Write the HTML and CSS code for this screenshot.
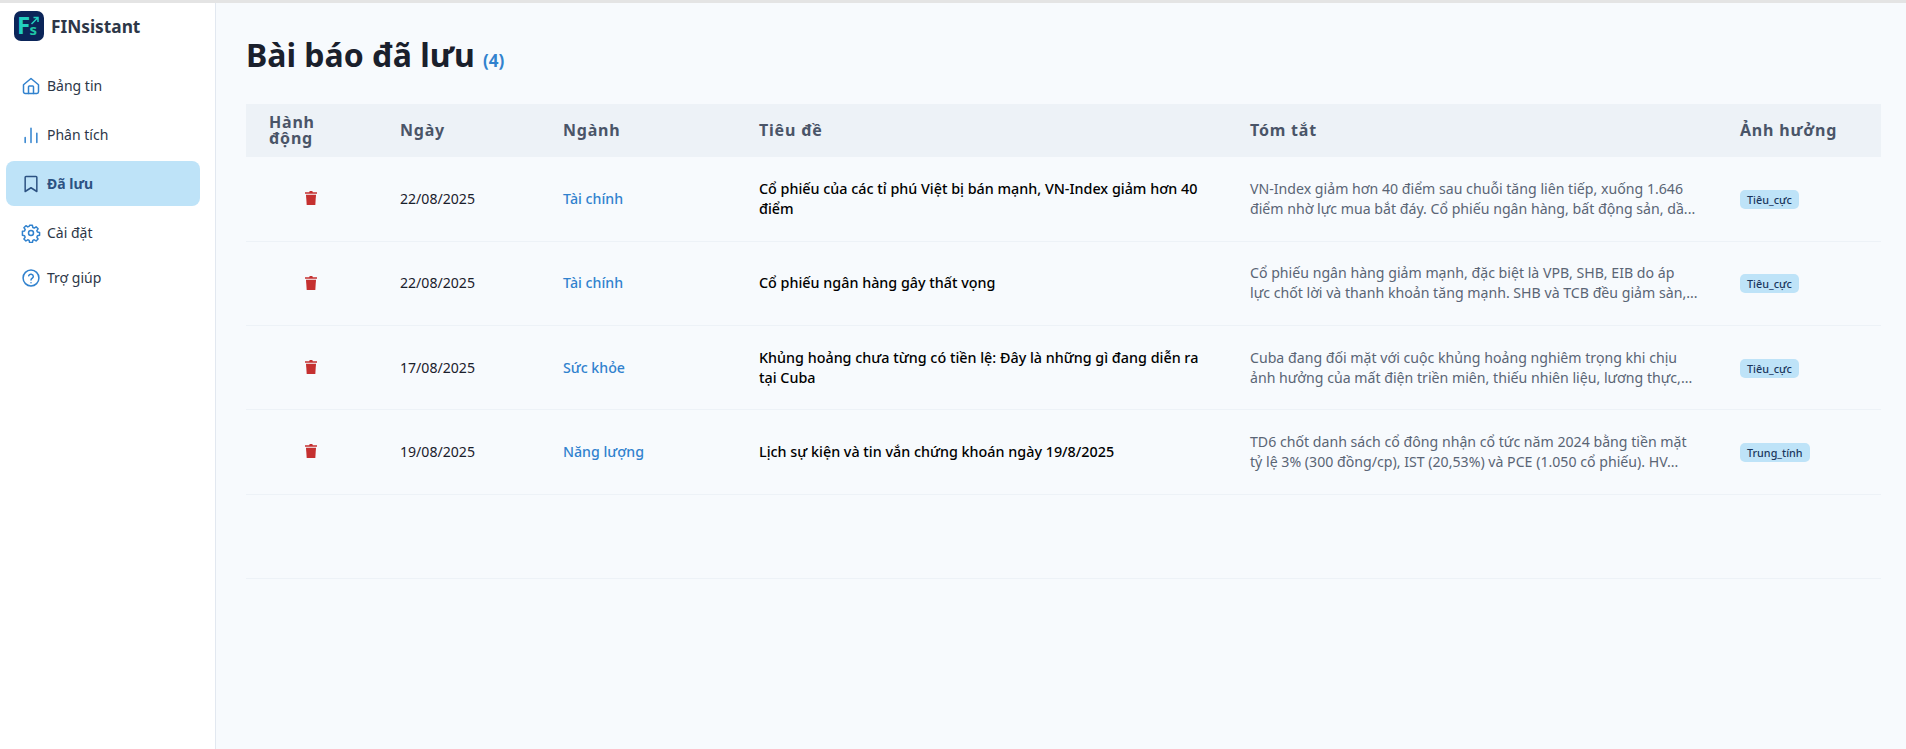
FILE: index.html
```html
<!DOCTYPE html>
<html lang="vi">
<head>
  <meta charset="utf-8">
  <title>FINsistant</title>
  <link rel="stylesheet" href="styles.css">
</head>
<body>
  <div class="app">
    <aside class="sidebar">
      <div class="brand">
        <svg class="brand-logo" viewBox="0 0 30 30">
          <rect width="30" height="30" rx="7" fill="#0b2559"/>
          <text x="3" y="23" class="logo-f" fill="#22cfc0">F</text>
          <text x="15.5" y="23.5" class="logo-s" fill="#1fc6a6">s</text>
          <path d="M17.5 13l6-6M19.5 6.5h4.5V11" fill="none" stroke="#22cfc0" stroke-width="1.5"/>
        </svg>
        <span class="brand-name">FINsistant</span>
      </div>
      <nav class="nav">
        <a class="nav-item nav-spaced">
          <svg class="nav-icon" viewBox="0 0 24 24"><path d="M3 10.5 12 3l9 7.5V19a2 2 0 0 1-2 2H5a2 2 0 0 1-2-2z"/><path d="M9 21v-8a1 1 0 0 1 1-1h4a1 1 0 0 1 1 1v8"/></svg>
          Bảng tin
        </a>
        <a class="nav-item nav-spaced">
          <svg class="nav-icon" viewBox="0 0 24 24"><path d="M5 15v6M12 4v17M19 10v11"/></svg>
          Phân tích
        </a>
        <a class="nav-item nav-spaced nav-active">
          <svg class="nav-icon" viewBox="0 0 24 24"><path d="M6 3h12a1 1 0 0 1 1 1v17l-7-4.5L5 21V4a1 1 0 0 1 1-1z"/></svg>
          Đã lưu
        </a>
        <a class="nav-item">
          <svg class="nav-icon" viewBox="0 0 24 24"><circle cx="12" cy="12" r="3"/><path d="M10.3 2.8h3.4l.5 2.6 1.7.7 2.2-1.5 2.4 2.4-1.5 2.2.7 1.7 2.6.5v3.4l-2.6.5-.7 1.7 1.5 2.2-2.4 2.4-2.2-1.5-1.7.7-.5 2.6h-3.4l-.5-2.6-1.7-.7-2.2 1.5-2.4-2.4 1.5-2.2-.7-1.7-2.6-.5V10l2.6-.5.7-1.7-1.5-2.2 2.4-2.4 2.2 1.5 1.7-.7z"/></svg>
          Cài đặt
        </a>
        <a class="nav-item">
          <svg class="nav-icon" viewBox="0 0 24 24"><circle cx="12" cy="12" r="9.5"/><path d="M9.2 9.3a2.9 2.9 0 0 1 5.6 1c0 1.9-2.8 2.4-2.8 4"/><path d="M12 17.6v.1"/></svg>
          Trợ giúp
        </a>
      </nav>
    </aside>

    <main class="content">
      <h1 class="page-title">Bài báo đã lưu <span class="page-count">(4)</span></h1>
      <table class="articles">
        <colgroup>
          <col class="col-action"><col class="col-date"><col class="col-sector"><col class="col-title"><col class="col-summary"><col class="col-impact">
        </colgroup>
        <thead>
          <tr>
            <th class="head-action">Hành động</th>
            <th>Ngày</th>
            <th>Ngành</th>
            <th>Tiêu đề</th>
            <th>Tóm tắt</th>
            <th>Ảnh hưởng</th>
          </tr>
        </thead>
        <tbody>
          <tr>
            <td class="cell-action"><svg class="trash" viewBox="0 0 14 16"><path d="M1 2.2h4.2L5.7 1h2.6l.5 1.2H13v1.6H1z"/><path d="M2 4.8h10l-.7 10.2H2.7z"/></svg></td>
            <td class="cell-date">22/08/2025</td>
            <td class="cell-sector">Tài chính</td>
            <td class="cell-title">Cổ phiếu của các tỉ phú Việt bị bán mạnh, VN-Index giảm hơn 40 điểm</td>
            <td class="cell-summary">VN-Index giảm hơn 40 điểm sau chuỗi tăng liên tiếp, xuống 1.646<br>điểm nhờ lực mua bắt đáy. Cổ phiếu ngân hàng, bất động sản, dầ...</td>
            <td><span class="badge">Tiêu_cực</span></td>
          </tr>
          <tr>
            <td class="cell-action"><svg class="trash" viewBox="0 0 14 16"><path d="M1 2.2h4.2L5.7 1h2.6l.5 1.2H13v1.6H1z"/><path d="M2 4.8h10l-.7 10.2H2.7z"/></svg></td>
            <td class="cell-date">22/08/2025</td>
            <td class="cell-sector">Tài chính</td>
            <td class="cell-title">Cổ phiếu ngân hàng gây thất vọng</td>
            <td class="cell-summary">Cổ phiếu ngân hàng giảm mạnh, đặc biệt là VPB, SHB, EIB do áp<br>lực chốt lời và thanh khoản tăng mạnh. SHB và TCB đều giảm sàn,...</td>
            <td><span class="badge">Tiêu_cực</span></td>
          </tr>
          <tr>
            <td class="cell-action"><svg class="trash" viewBox="0 0 14 16"><path d="M1 2.2h4.2L5.7 1h2.6l.5 1.2H13v1.6H1z"/><path d="M2 4.8h10l-.7 10.2H2.7z"/></svg></td>
            <td class="cell-date">17/08/2025</td>
            <td class="cell-sector">Sức khỏe</td>
            <td class="cell-title">Khủng hoảng chưa từng có tiền lệ: Đây là những gì đang diễn ra tại Cuba</td>
            <td class="cell-summary">Cuba đang đối mặt với cuộc khủng hoảng nghiêm trọng khi chịu<br>ảnh hưởng của mất điện triền miên, thiếu nhiên liệu, lương thực,...</td>
            <td><span class="badge">Tiêu_cực</span></td>
          </tr>
          <tr>
            <td class="cell-action"><svg class="trash" viewBox="0 0 14 16"><path d="M1 2.2h4.2L5.7 1h2.6l.5 1.2H13v1.6H1z"/><path d="M2 4.8h10l-.7 10.2H2.7z"/></svg></td>
            <td class="cell-date">19/08/2025</td>
            <td class="cell-sector">Năng lượng</td>
            <td class="cell-title">Lịch sự kiện và tin vắn chứng khoán ngày 19/8/2025</td>
            <td class="cell-summary">TD6 chốt danh sách cổ đông nhận cổ tức năm 2024 bằng tiền mặt<br>tỷ lệ 3% (300 đồng/cp), IST (20,53%) và PCE (1.050 cổ phiếu). HV...</td>
            <td><span class="badge">Trung_tính</span></td>
          </tr>
          <tr>
            <td colspan="6"></td>
          </tr>
        </tbody>
      </table>
    </main>
  </div>
</body>
</html>
```

FILE: styles.css
```css
* {
  box-sizing: border-box;
}

html, body {
  margin: 0;
  padding: 0;
  height: 100%;
}

body {
  font-family: "Noto Sans", "Open Sans", sans-serif;
  font-size: 14px;
  color: #1a202c;
  background-color: #f7fafd;
  overflow: hidden;
}

.app {
  display: flex;
  height: 100%;
  border-top: 3px solid #e4e4e4;
}

/* Sidebar */
.sidebar {
  flex: 0 0 216px;
  background-color: #fff;
  border-right: 1px solid #e2e8f0;
  padding: 8px 15px 0 6px;
}

.brand {
  display: flex;
  align-items: center;
  gap: 7px;
  padding-left: 8px;
  height: 30px;
}

.brand-logo {
  width: 30px;
  height: 30px;
  overflow: visible;
}

.logo-f {
  font: 700 24px "Noto Sans", sans-serif;
}

.logo-s {
  font: 700 15px "Noto Sans", sans-serif;
}

.brand-name {
  font-size: 17.3px;
  font-weight: 700;
  color: #2d3748;
}

.nav {
  display: flex;
  flex-direction: column;
  margin-top: 22px;
}

.nav-item {
  display: flex;
  align-items: center;
  gap: 6px;
  height: 45px;
  padding-left: 15px;
  border-radius: 8px;
  color: #2d3748;
}

.nav-spaced {
  margin-bottom: 4px;
}

.nav-active {
  background-color: #bee3f8;
  font-weight: 700;
  color: #2c5282;
}

.nav-icon {
  width: 20px;
  height: 20px;
  fill: none;
  stroke: #3182ce;
  stroke-width: 1.8;
  stroke-linecap: round;
  stroke-linejoin: round;
}

.nav-active .nav-icon {
  stroke: #2c5282;
}

/* Main content */
.content {
  flex: 1;
  padding: 29px 25px 0 30px;
  min-width: 0;
}

.page-title {
  margin: 0 0 20px;
  font-size: 32px;
  line-height: 46px;
  font-weight: 700;
  color: #1a202c;
}

.page-count {
  font-size: 17px;
  font-weight: 700;
  color: #3182ce;
}

.articles {
  width: 100%;
  table-layout: fixed;
  border-collapse: collapse;
}

.col-action { width: 130px; }
.col-date { width: 163px; }
.col-sector { width: 196px; }
.col-title { width: 491px; }
.col-summary { width: 490px; }

.articles th {
  height: 53px;
  padding: 0 24px 2px;
  text-align: left;
  background-color: #edf2f7;
  color: #4a5568;
  font-size: 16px;
  line-height: 16px;
  font-weight: 700;
  letter-spacing: 0.8px;
}

.articles .head-action {
  padding-left: 23px;
}

.articles td {
  height: 84.25px;
  padding: 0 24px;
  border-bottom: 1px solid #edf2f7;
  line-height: 20px;
}

.articles .cell-action {
  text-align: center;
}

.trash {
  display: inline-block;
  vertical-align: middle;
  width: 14px;
  height: 16px;
  margin-bottom: 3px;
  fill: #c53030;
}

.cell-date {
  font-size: 14.1px;
}

.cell-sector {
  color: #3182ce;
  font-size: 14.2px;
  font-weight: 500;
}

.articles .cell-title {
  color: #000;
  font-size: 14.35px;
  font-weight: 500;
}

.articles .cell-summary {
  padding-right: 0;
  color: #5a6575;
  font-size: 14.15px;
  white-space: nowrap;
}

.badge {
  display: inline-block;
  padding: 0 7px;
  border-radius: 5px;
  background-color: #bee3f8;
  color: #1a365d;
  font-size: 10.8px;
  line-height: 19px;
  font-weight: 500;
}
```
